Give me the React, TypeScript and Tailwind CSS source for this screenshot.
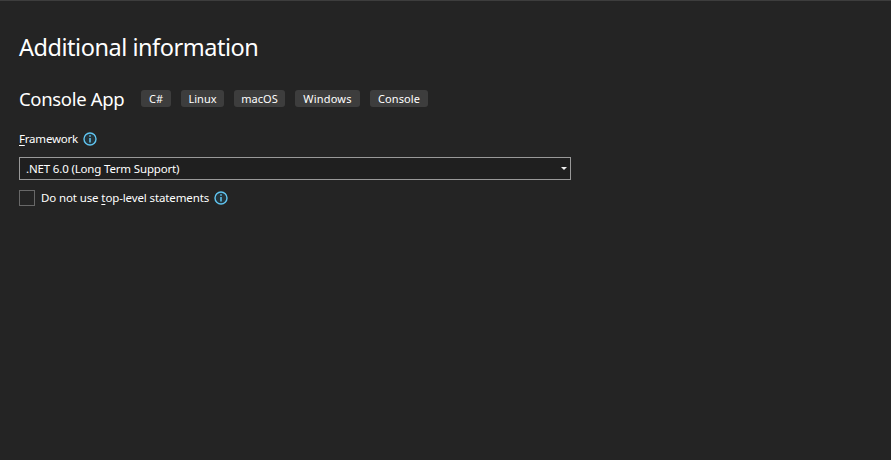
import React from "react";

const tags = [
  { label: "C#", box: "w-[30px]" },
  { label: "Linux", box: "w-[43px]" },
  { label: "macOS", box: "w-[51px]" },
  { label: "Windows", box: "w-[65px] tracking-[0.2px]" },
  { label: "Console", box: "w-[58px] tracking-[0.1px]" },
];

function InfoIcon() {
  return (
    <svg className="h-[14px] w-[14px] shrink-0" viewBox="0 0 14 14" fill="none">
      <circle cx="7" cy="7" r="6" fill="#24343b" stroke="#60c5f1" strokeWidth="1.4" />
      <path d="M7 6v4.5M7 3.3v1.5" stroke="#60c5f1" strokeWidth="1.5" />
    </svg>
  );
}

export default function App() {
  return (
    <main className="h-[460px] w-[891px] overflow-hidden border-t border-[#3d3d3d] bg-[#242424] pl-[19px] font-['Noto_Sans',sans-serif] text-white">
      <h1 className="mt-[29px] h-[34px] whitespace-nowrap text-[23.5px] leading-[34px] tracking-[-0.47px]">Additional information</h1>
      <div className="mt-[21px] flex h-[28px] items-center">
        <h2 className="w-[122px] whitespace-nowrap text-[18.5px] leading-[28px] tracking-[-0.33px]">Console App</h2>
        <div className="flex gap-[10px]">
          {tags.map((tag) => (
            <span key={tag.label} className={`mb-px flex h-[17px] items-center justify-center rounded-[3px] bg-[#3d3d3d] text-[11px] leading-[17px] ${tag.box}`}>
              <span className="-mt-px">{tag.label}</span>
            </span>
          ))}
        </div>
      </div>
      <div className="mt-[17px] flex h-[18px] items-center gap-[5px] text-[11.5px] tracking-[-0.2px]">
        <label className="w-[59px] whitespace-nowrap"><span className="underline underline-offset-2">F</span>ramework</label>
        <InfoIcon />
      </div>
      <button className="mt-[9px] flex h-[23px] w-[552px] items-center justify-between border border-[#999999] bg-[#1f1f1f] pl-[6px] pr-[3px] text-[11.5px] tracking-[-0.16px]">
        <span className="whitespace-nowrap">.NET 6.0 (Long Term Support)</span>
        <svg className="h-[3px] w-[6px]" viewBox="0 0 6 3"><path d="M0 0h6L3 3z" fill="#f0f0f0" /></svg>
      </button>
      <div className="mt-[9px] flex h-[18px] items-center text-[11.5px] tracking-[-0.12px]">
        <span className="h-4 w-4 border border-[#686868]" />
        <span className="ml-[6px] w-[173px] whitespace-nowrap">Do not use <span className="underline underline-offset-2">t</span>op-level statements</span>
        <InfoIcon />
      </div>
    </main>
  );
}
